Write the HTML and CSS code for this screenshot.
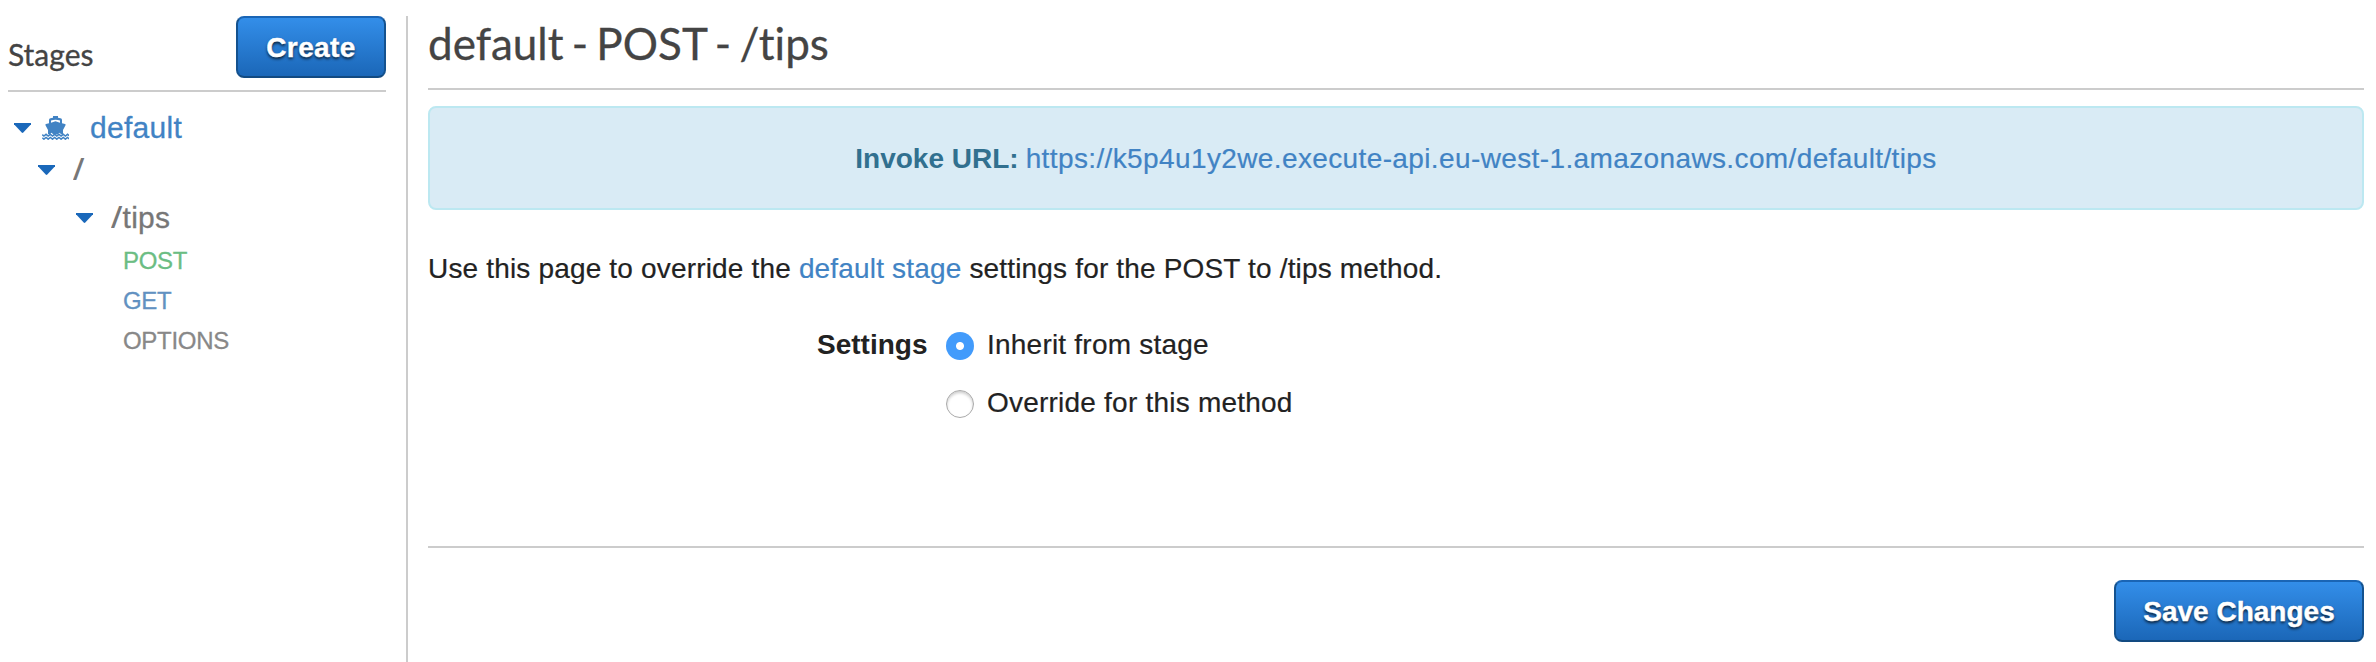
FILE: index.html
```html
<!DOCTYPE html>
<html lang="en">
<head>
<meta charset="utf-8">
<title>Stage Editor</title>
<link rel="stylesheet" href="styles.css">
</head>
<body>
<div class="app">
  <aside class="sidebar">
    <header class="sidebar-head">
      <h2 class="sidebar-title">Stages</h2>
      <button class="btn btn-create" type="button">Create</button>
    </header>
    <ul class="tree">
      <li class="node node-stage">
        <svg class="caret" viewBox="0 0 17 10"><path d="M0 0h17v1.300L9.300 9.600q-.8.700-1.600 0L0 1.300z"/></svg>
        <svg class="ship" viewBox="0 0 27 24"><path fill-rule="evenodd" d="M11 0h5v1.800l2.500.4q1.500.3 1.500 1.800v3.200l3 .8q1 .4.500 1.300L21 14v4l-1.500.5-2-1.700-2 1.700h-4l-2-1.700-2 1.700L6 18v-4L3.500 9.300Q3 8.400 4 8l3-.8V4q0-1.500 1.500-1.800L11 1.800zM9 4.500v2.200L13.500 5.300 18 6.700V4.500Q13.500 3 9 4.500z"/><path class="wave" d="M.3 18.700l1.600 1.300 2.150-1.700 2.150 1.700 2.150-1.700 2.150 1.700 2.150-1.700 2.150 1.700 2.150-1.700 2.150 1.700 2.150-1.700 2.150 1.700 2.150-1.700 1.700 1.300M.3 21.900l1.600 1.300 2.150-1.700 2.150 1.700 2.150-1.700 2.150 1.700 2.150-1.700 2.150 1.700 2.150-1.700 2.150 1.700 2.150-1.700 2.150 1.700 2.150-1.700 1.700 1.300"/></svg>
        <a class="stage-name">default</a>
      </li>
      <li class="node node-root">
        <svg class="caret" viewBox="0 0 17 10"><path d="M0 0h17v1.300L9.300 9.600q-.8.700-1.600 0L0 1.300z"/></svg>
        <span class="path"><span class="slash">/</span></span>
      </li>
      <li class="node node-resource">
        <svg class="caret" viewBox="0 0 17 10"><path d="M0 0h17v1.300L9.300 9.600q-.8.700-1.600 0L0 1.300z"/></svg>
        <span class="path"><span class="slash">/</span>tips</span>
      </li>
      <li class="method method-post">POST</li>
      <li class="method method-get">GET</li>
      <li class="method method-options">OPTIONS</li>
    </ul>
  </aside>
  <main class="content">
    <h1 class="title">default - POST - /tips</h1>
    <div class="alert"><strong>Invoke URL:</strong> <a class="url">https://k5p4u1y2we.execute-api.eu-west-1.amazonaws.com/default/tips</a></div>
    <p class="intro">Use this page to override the <a>default stage</a> settings for the POST to /tips method.</p>
    <div class="settings">
      <strong class="settings-label">Settings</strong>
      <div class="choices">
        <label class="option"><span class="radio radio-on"></span>Inherit from stage</label>
        <label class="option"><span class="radio"></span>Override for this method</label>
      </div>
    </div>
    <footer class="actions"><button class="btn btn-save" type="button">Save Changes</button></footer>
  </main>
</div>
</body>
</html>
```
FILE: styles.css
```css
* { box-sizing: border-box; }
body { margin: 0; background: #fff; color: #222; font: 28px/40px "Liberation Sans", Arial, sans-serif; }
h1, h2, p, ul { margin: 0; padding: 0; font-weight: normal; }
a { color: #4183c4; }
.app { display: flex; height: 662px; padding: 16px 12px 0 8px; overflow: hidden; }
.sidebar { width: 400px; padding-right: 20px; border-right: 2px solid #ccc; }
.sidebar-head { display: flex; justify-content: space-between; height: 76px; border-bottom: 2px solid #ccc; }
.sidebar-title { padding-top: 18px; color: #444; font: 30px/40px Lato, sans-serif; -webkit-text-stroke: .3px; }
.btn { height: 62px; padding: 2px 0 0; border: 2px solid; border-color: #1a65b5 #14528f #124a81; border-radius: 8px; background: linear-gradient(#338ee9, #1b67b8); color: #fff; font: bold 28px/56px "Liberation Sans", Arial, sans-serif; text-shadow: 0 2px 3px rgba(0, 0, 0, .75); }
.btn-create { width: 150px; letter-spacing: .4px; -webkit-text-stroke: .4px; }
.btn-save { width: 250px; -webkit-text-stroke: .4px; }
.tree { list-style: none; font-size: 30px; }
.node { display: flex; align-items: center; height: 40px; }
.caret { flex: none; width: 17px; height: 10px; fill: #1a68ba; }
.ship { flex: none; width: 27px; height: 24px; margin: 0 21px 0 11px; fill: #4183c4; }
.wave { fill: none; stroke: #4183c4; stroke-width: 1.500; }
.stage-name { letter-spacing: .3px; -webkit-text-stroke: .3px; }
.node-stage { margin-top: 16px; padding-left: 6px; }
.node-root { margin-top: 2px; padding-left: 30px; }
.node-root .path { margin-left: 18px; }
.node-resource { margin-top: 8px; padding-left: 68px; }
.node-resource .path { margin-left: 18px; letter-spacing: .3px; -webkit-text-stroke: .3px; }
.path { color: #777; }
.slash { display: inline-block; width: 11.500px; transform: scaleX(1.350); transform-origin: 0 0; -webkit-text-stroke: 0; }
.method { height: 40px; padding-left: 115px; font-size: 24px; line-height: 46px; letter-spacing: -.3px; color: #888; -webkit-text-stroke: .3px; }
.method-post { color: #6bbd83; }
.method-get { color: #6191c1; }
.content { flex: 1; padding-left: 20px; }
.title { height: 74px; border-bottom: 2px solid #ccc; color: #444; font: 44px/54px Lato, sans-serif; word-spacing: -3px; font-variant-ligatures: none; -webkit-text-stroke: .3px; }
.alert { display: flex; justify-content: center; gap: 7px; height: 104px; margin-top: 16px; padding-top: 31px; border: 2px solid #bce8f1; border-radius: 8px; background: #d9ebf5; }
.alert strong { color: #31708f; }
.url { letter-spacing: .38px; -webkit-text-stroke: .2px; }
.intro { margin-top: 39px; letter-spacing: .17px; -webkit-text-stroke: .2px; }
.settings { display: flex; height: 221px; margin-top: 36px; padding-left: 389px; }
.settings-label { width: 129px; }
.option { display: flex; height: 58px; letter-spacing: .22px; -webkit-text-stroke: .2px; }
.radio { width: 28px; height: 28px; margin: 7px 13px 0 0; border: 1px solid #aaa; border-radius: 50%; background: #fff; box-shadow: inset 0 2px 3px rgba(0, 0, 0, .2); }
.radio-on { border: 0; background: radial-gradient(circle, #fff 3.500px, #429bfb 4.500px); box-shadow: none; }
.actions { display: flex; justify-content: flex-end; padding-top: 32px; border-top: 2px solid #ccc; }
```
